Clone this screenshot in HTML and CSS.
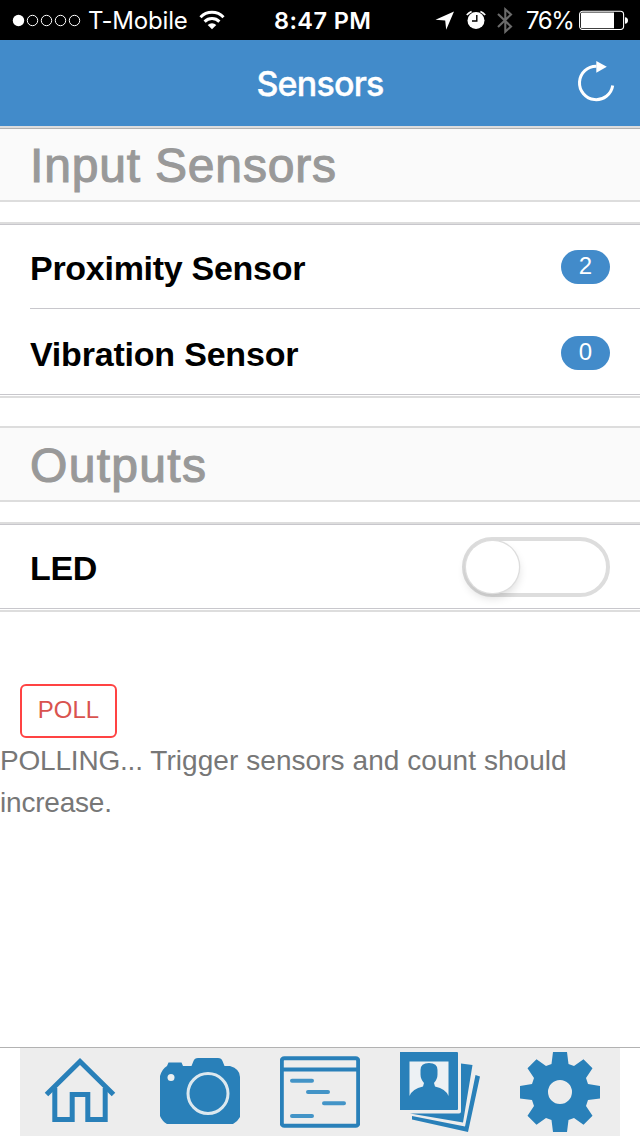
FILE: index.html
```html
<!DOCTYPE html>
<html lang="en">
<head>
<meta charset="utf-8">
<title>Sensors</title>
<link rel="stylesheet" href="styles.css">
</head>
<body>
<div class="screen">
  <div class="status">
    <svg class="signal" width="70" height="14" viewBox="0 0 70 14" fill="none" stroke="#fff" stroke-width="1"><circle cx="6.500" cy="7.500" r="5.700" fill="#fff" stroke="none"/><circle cx="20.500" cy="7.500" r="5.200"/><circle cx="34.500" cy="7.500" r="5.200"/><circle cx="48.500" cy="7.500" r="5.200"/><circle cx="62.500" cy="7.500" r="5.200"/></svg>
    <span class="carrier">T-Mobile</span>
    <svg class="wifi" width="26" height="20" viewBox="0 0 26 20" fill="none" stroke="#fff" stroke-width="3"><path d="M1.500 7.200a16 16 0 0 1 23 0M5.600 11.600a10.500 10.500 0 0 1 14.800 0"/><path d="M8.700 15a6.300 6.300 0 0 1 8.600 0L13 19.300z" fill="#fff" stroke="none"/></svg>
    <span class="time">8:47 PM</span>
    <svg class="location" width="20" height="20" viewBox="0 0 20 20"><path d="M19 1.500L11.200 19.800 10.200 10.500.5 9.800z" fill="#fff"/></svg>
    <svg class="alarm" width="20" height="20" viewBox="0 0 20 20"><circle cx="10" cy="10.600" r="8.500" fill="#fff"/><path d="M.8 5A14 14 0 0 1 5.600 1.500M14.400 1.500A14 14 0 0 1 19.200 5" stroke="#fff" stroke-width="1.700" fill="none"/><path d="M10.800 5v6H6" stroke="#000" stroke-width="1.400" fill="none"/></svg>
    <svg class="bluetooth" width="16" height="28" viewBox="0 0 16 28" fill="none" stroke="#6b6b6b" stroke-width="2.100"><path d="M1 7.900L14 20.500 8.300 25.700V3.300L14 8.500 1 21.100"/></svg>
    <span class="percent">76%</span>
    <svg class="battery" width="50" height="20" viewBox="0 0 50 20"><rect x=".6" y="1.300" width="44" height="18.200" rx="3.200" fill="none" stroke="#fff" stroke-width="1.100"/><path d="M2 3.600a1 1 0 0 1 1-1h32v15.600H3a1 1 0 0 1-1-1z" fill="#fff"/><path d="M46 7.300c4 0 4 6.500 0 6.500z" fill="#fff"/></svg>
  </div>
  <header class="navbar">
    <h1 class="title">Sensors</h1>
    <svg class="refresh" width="40" height="44" viewBox="0 0 40 44"><path d="M20.500 5.300A16.700 16.700 0 1 0 36.700 24.500" fill="none" stroke="#fff" stroke-width="3"/><path d="M20.300 0L30.800 5.800 20.300 11.800z" fill="#fff"/></svg>
  </header>
  <main class="content">
    <h2 class="section first"><span class="t-input">Input Sensors</span></h2>
    <ul class="list">
      <li class="row short"><span class="label t-prox">Proximity Sensor</span><span class="badge">2</span></li>
      <li class="row divided"><span class="label t-vib">Vibration Sensor</span><span class="badge">0</span></li>
    </ul>
    <h2 class="section second"><span class="t-out">Outputs</span></h2>
    <ul class="list">
      <li class="row"><span class="label t-led">LED</span><span class="toggle"><span class="knob"></span></span></li>
    </ul>
    <button class="poll">POLL</button>
    <p class="message"><span class="t-line1">POLLING... <span class="t-rest">Trigger sensors and count should</span></span><br><span class="t-line2">increase.</span></p>
  </main>
  <nav class="tabs">
    <svg class="tab" viewBox="0 0 80 80" fill="none" stroke="#2980b9" stroke-width="5"><path d="M6.500 42.500L40 9.500 73.500 42.500"/><path d="M14.800 36v31.500h17.400V42.500h15.600v25h17.400V36"/></svg>
    <svg class="tab" viewBox="0 0 80 80"><path d="M7 14l1.500-3.500h13L23 14h8.500l2-5Q34.500 6 38 6h20q3.500 0 4.500 3l2 5H70q10 3 10 11v40q-2 4-7 7H7q-5-3-7-8V24q2-7 7-10z" fill="#2980b9"/><circle cx="11" cy="25.500" r="3.500" fill="#ecf0f1"/><circle cx="48" cy="41.500" r="20" fill="none" stroke="#dce8ef" stroke-width="3"/></svg>
    <svg class="tab" viewBox="0 0 80 80" fill="none" stroke="#2980b9"><rect x="1.800" y="6.300" width="76.400" height="67.500" rx="2.500" stroke-width="4"/><path d="M2 17.500h76" stroke-width="4"/><path d="M12 28.700h20M28 40h20M44 51.300h20M12 64h20" stroke="#4394c7" stroke-width="4" stroke-linecap="round"/></svg>
    <svg class="tab" viewBox="0 0 80 80"><path d="M0 0h57q1 0 1 1v56q0 1-1 1H0z" fill="#2980b9"/><path d="M9.500 9.500h39V44Q46 37 35 34.500L34 31q3.500-4 3.500-8.500V18q0-7-8.500-7t-8.500 7v4.500q0 4.500 3.500 8.500l-1 3.500Q12 37 9.500 44z" fill="#edf1f4"/><path d="M61 11.500l11.500 1.500L63 70.500 10 61.500h49q2 0 2-2z" fill="#2980b9"/><path d="M75.500 23l4.500 1.500L68 80 12 67.500v-3.500L65 74.500z" fill="#2980b9"/></svg>
    <svg class="tab" viewBox="0 0 80 80"><path fill="#2980b9" fill-rule="evenodd" d="M33 0h14l1.500 12 5.500 2 9.500-6.700 9 9L66 26l2 6 12 2v12.500L68 48l-2 6 6.500 9.700-9 9L54 66l-5.500 2L47 80H33l-1.500-12-5.500-2-9.500 6.700-9-9L14 54l-2-6-12-1.500V34l12-2 2-6-6.500-9.700 9-9L26 14l5.500-2zM40 28a12 12 0 1 0 0 24a12 12 0 1 0 0-24z"/></svg>
  </nav>
</div>
</body>
</html>
```
FILE: styles.css
```css
* { box-sizing: border-box; }
body { margin: 0; background: #fff; font-family: "Liberation Sans", Arial, sans-serif; }
.screen { width: 640px; height: 1136px; display: flex; flex-direction: column; overflow: hidden; }
h1, h2, p, ul { margin: 0; padding: 0; }
ul { list-style: none; }
span { white-space: nowrap; }

.status { height: 40px; background: #000; color: #fff; display: flex; align-items: center; font: 24px/42px Inter, sans-serif; flex: none; padding-left: 12px; }
.status svg { flex: none; }
.status span { flex: none; height: 40px; }
.signal { margin-right: 6px; }
.carrier { width: 100px; letter-spacing: -0.2px; }
.wifi { margin-left: 11px; }
.time { width: 100px; margin-left: 49px; font-weight: 600; font-size: 23.5px; letter-spacing: 0.4px; }
.location { margin-left: 61px; }
.alarm { margin-left: 11px; }
.bluetooth { margin-left: 11px; }
.percent { width: 49px; margin-left: 13px; letter-spacing: -1.4px; }
.battery { margin-left: 4px; }

.navbar { height: 86px; background: #428bca; display: grid; grid-template-columns: 70px 1fr 70px; align-items: center; flex: none; }
.title { grid-column: 2; text-align: center; color: #fff; font: 500 34px/44px Inter, sans-serif; letter-spacing: -0.8px; padding-top: 2px; -webkit-text-stroke: 0.4px #fff; }
.refresh { margin-left: 6px; }

.content { flex: 1; min-height: 0; }
.section { height: 76px; border-top: 2px solid #ddd; border-bottom: 2px solid #ddd; background: #fafafa; padding: 2px 30px 0; font-size: 48px; line-height: 72px; font-weight: 400; color: #999; -webkit-text-stroke: 1.1px #999; }
.t-input { letter-spacing: 0.82px; }
.t-out { letter-spacing: 1.3px; }
.first { box-shadow: inset 0 1px #b2b2b2; }
.second { margin-top: 28px; }
.list { position: relative; margin-top: 20px; border-top: 2px solid #ddd; border-bottom: 2px solid #ddd; box-shadow: inset 0 1px #c8c7cc; padding: 1px 0; }
.list::after { content: ""; display: block; height: 1px; background: #c8c7cc; position: absolute; left: 0; right: 0; bottom: 1px; }
.row { height: 84px; padding: 0 30px; display: flex; align-items: center; justify-content: space-between; }
.row.short { height: 83px; }
.row.divided { height: 87px; margin-left: 30px; padding: 2px 30px 0 0; border-top: 1px solid #c8c7cc; }
.label { font-size: 34px; line-height: 40px; font-weight: 700; padding-top: 3px; }
.t-prox { letter-spacing: -0.28px; }
.t-vib { letter-spacing: -0.2px; padding-top: 1px; }
.t-led { letter-spacing: -0.3px; padding-top: 1px; }
.badge { width: 49px; height: 34px; border-radius: 17px; background: #428bca; color: #fff; font-size: 24px; line-height: 32px; text-align: center; }
.toggle { width: 148px; height: 60px; border: 4px solid #ddd; border-radius: 30px; }
.knob { display: block; width: 53px; height: 52px; border-radius: 26px; background: #fff; box-shadow: 0 0 0 1.3px #ddd, 0 5px 10px rgba(0,0,0,.14); }

.poll { display: block; width: 97px; height: 54px; margin: 72px 0 0 20px; padding: 0 0 2px; border: 2px solid #ff4343; border-radius: 6px; background: #fff; color: #d9534f; font: 24px/48px "Liberation Sans", Arial, sans-serif; }
.message { font-size: 28px; line-height: 42px; color: #777; padding-top: 2px; }
.t-line1 { letter-spacing: -0.2px; }
.t-rest { letter-spacing: 0.06px; }
.t-line2 { letter-spacing: -0.2px; }

.tabs { height: 89px; flex: none; border-top: 1px solid #b2b2b2; display: flex; justify-content: space-between; background: linear-gradient(#ededed, #ededed) 20px 0 / 600px 88px no-repeat; padding: 4px 40px 0; }
.tab { width: 80px; height: 80px; flex: none; }
```
